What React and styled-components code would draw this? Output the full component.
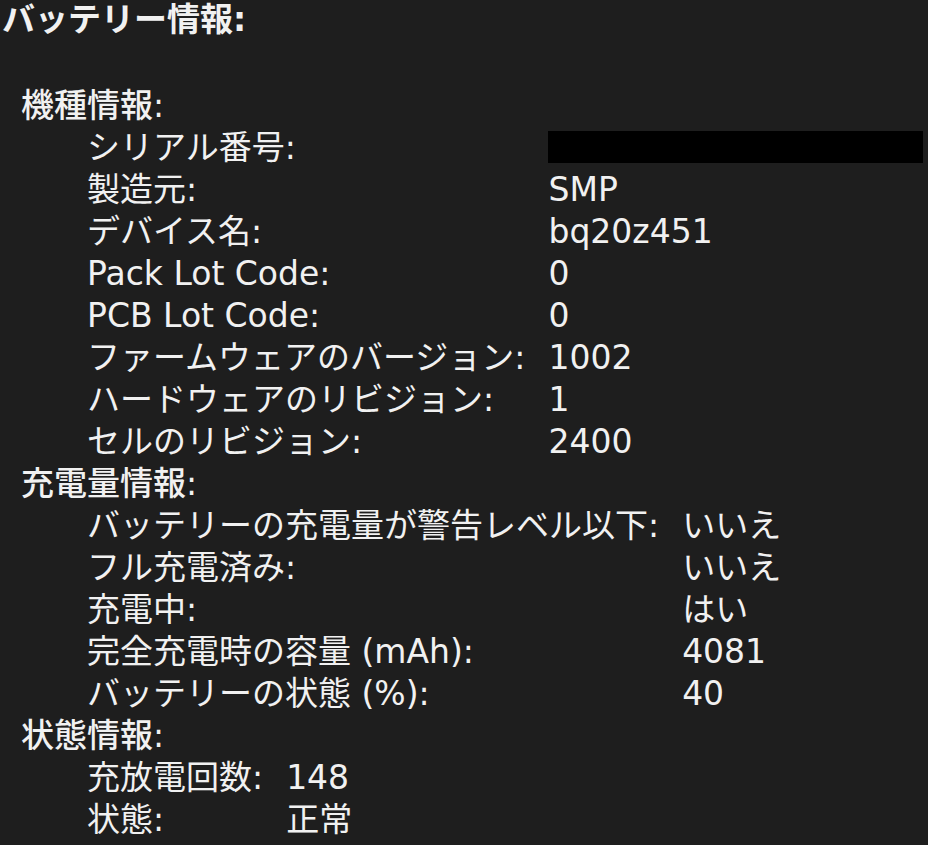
import React from "react";
import styled, { createGlobalStyle } from "styled-components";

const Global = createGlobalStyle`
  html, body {
    margin: 0;
    padding: 0;
    background: #1e1e1e;
    overflow: hidden;
  }
  #root {
    min-height: 845px;
    background: #1e1e1e;
  }
`;

const Page = styled.div`
  font-family: "DejaVu Sans", "Noto Sans CJK JP", sans-serif;
  font-size: 33px;
  line-height: 42px;
  color: #f1f1f1;
  padding: 0 0 0 2px;
  margin-top: -1px;
`;

const Title = styled.div`
  font-weight: 700;
  margin-bottom: 44px;
`;

const Section = styled.section`
  display: flex;
  flex-direction: column;
`;

const SectionHeader = styled.div`
  font-weight: 500;
  padding-left: 19px;
`;

const Grid = styled.div`
  display: grid;
  grid-template-columns: max-content max-content;
  column-gap: 23px;
  padding-left: 85px;
`;

const Label = styled.div`
  white-space: nowrap;
`;

const Value = styled.div`
  white-space: nowrap;
  display: flex;
  align-items: center;
`;

const Redacted = styled.span`
  display: block;
  width: 375px;
  height: 32px;
  background: #000;
  margin-top: -3px;
`;

const sections = [
  {
    title: "機種情報:",
    rows: [
      ["シリアル番号:", null],
      ["製造元:", "SMP"],
      ["デバイス名:", "bq20z451"],
      ["Pack Lot Code:", "0"],
      ["PCB Lot Code:", "0"],
      ["ファームウェアのバージョン:", "1002"],
      ["ハードウェアのリビジョン:", "1"],
      ["セルのリビジョン:", "2400"],
    ],
  },
  {
    title: "充電量情報:",
    rows: [
      ["バッテリーの充電量が警告レベル以下:", "いいえ"],
      ["フル充電済み:", "いいえ"],
      ["充電中:", "はい"],
      ["完全充電時の容量 (mAh):", "4081"],
      ["バッテリーの状態 (%):", "40"],
    ],
  },
  {
    title: "状態情報:",
    rows: [
      ["充放電回数:", "148"],
      ["状態:", "正常"],
    ],
  },
];

export default function App() {
  return (
    <>
      <Global />
      <Page>
        <Title>バッテリー情報:</Title>
        {sections.map((s) => (
          <Section key={s.title}>
            <SectionHeader>{s.title}</SectionHeader>
            <Grid>
              {s.rows.map(([label, value]) => (
                <React.Fragment key={label}>
                  <Label>{label}</Label>
                  <Value>{value === null ? <Redacted /> : value}</Value>
                </React.Fragment>
              ))}
            </Grid>
          </Section>
        ))}
      </Page>
    </>
  );
}
